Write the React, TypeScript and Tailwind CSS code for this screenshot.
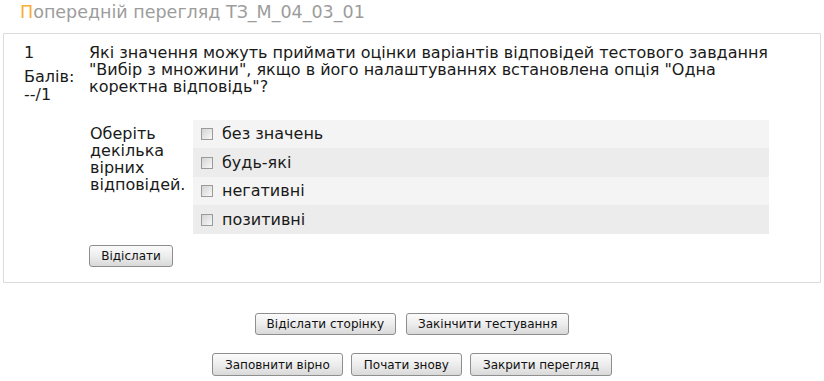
import React from 'react'

const options = ['без значень', 'будь-які', 'негативні', 'позитивні']

function Btn({ children, className = '' }: { children: React.ReactNode; className?: string }) {
  return (
    <button
      className={
        'h-[22px] px-[11px] text-[12px] leading-none text-[#111] rounded-[3px] border border-[#8e8e8e] bg-gradient-to-b from-[#fbfbfb] via-[#ededed] to-[#d9d9d9] ' +
        className
      }
    >
      {children}
    </button>
  )
}

function Checkbox() {
  return (
    <span className="inline-block w-[12px] h-[12px] border border-[#9a9a9a] bg-gradient-to-br from-[#d4d4d4] to-[#f8f8f8] shrink-0" />
  )
}

export default function App() {
  return (
    <div
      className="w-[824px] h-[381px] bg-white overflow-hidden text-[#1a1a1a]"
      style={{ fontFamily: '"DejaVu Sans", Verdana, sans-serif' }}
    >
      {/* Page title */}
      <h2 className="pl-[20px] pt-[1px] h-[33px] text-[17.5px] leading-[22px] text-[#9c9c9c]">
        <span className="text-[#f8ad35]">П</span>опередній перегляд ТЗ_М_04_03_01
      </h2>

      {/* Question box */}
      <div className="mx-[3px] h-[250px] border border-[#dcdcdc] flex">
        <div className="w-[85px] pl-[20px] pt-[10px] text-[16px] leading-[17px]">
          <div className="mb-[7px]">1</div>
          <div className="h-[17px]">Балів:</div>
          <div className="h-[17px] pt-[1px]">--/1</div>
        </div>

        <div className="flex-1 pt-[10px]">
          <p className="text-[16px] leading-[17px] pr-[40px]">
            Які значення можуть приймати оцінки варіантів відповідей тестового завдання "Вибір з множини", якщо в
            його налаштуваннях встановлена опція "Одна коректна відповідь"?
          </p>

          <div className="flex mt-[25px]">
            <div className="w-[104px] pl-[1px] pt-[5px] text-[16px] leading-[17px]">
              Оберіть декілька вірних відповідей.
            </div>
            <div className="w-[576px]">
              {options.map((o, i) => (
                <div
                  key={o}
                  className={
                    'flex items-center gap-[9px] pl-[8px] ' +
                    (i === 1 || i === 3 ? 'h-[29px] bg-[#ececec]' : 'h-[28px] bg-[#f4f4f4]')
                  }
                >
                  <Checkbox />
                  <span className="text-[16px]">{o}</span>
                </div>
              ))}
            </div>
          </div>

          <div className="mt-[9px]">
            <Btn className="w-[84px]">Відіслати</Btn>
          </div>
        </div>
      </div>

      {/* Navigation buttons */}
      <div className="flex justify-center gap-[10px] mt-[30px]">
        <Btn>Відіслати сторінку</Btn>
        <Btn>Закінчити тестування</Btn>
      </div>
      <div className="flex justify-center gap-[8px] mt-[18px]">
        <Btn className="h-[23px] px-[12px]">Заповнити вірно</Btn>
        <Btn className="h-[23px] px-[12px]">Почати знову</Btn>
        <Btn className="h-[23px] px-[12px]">Закрити перегляд</Btn>
      </div>
    </div>
  )
}
